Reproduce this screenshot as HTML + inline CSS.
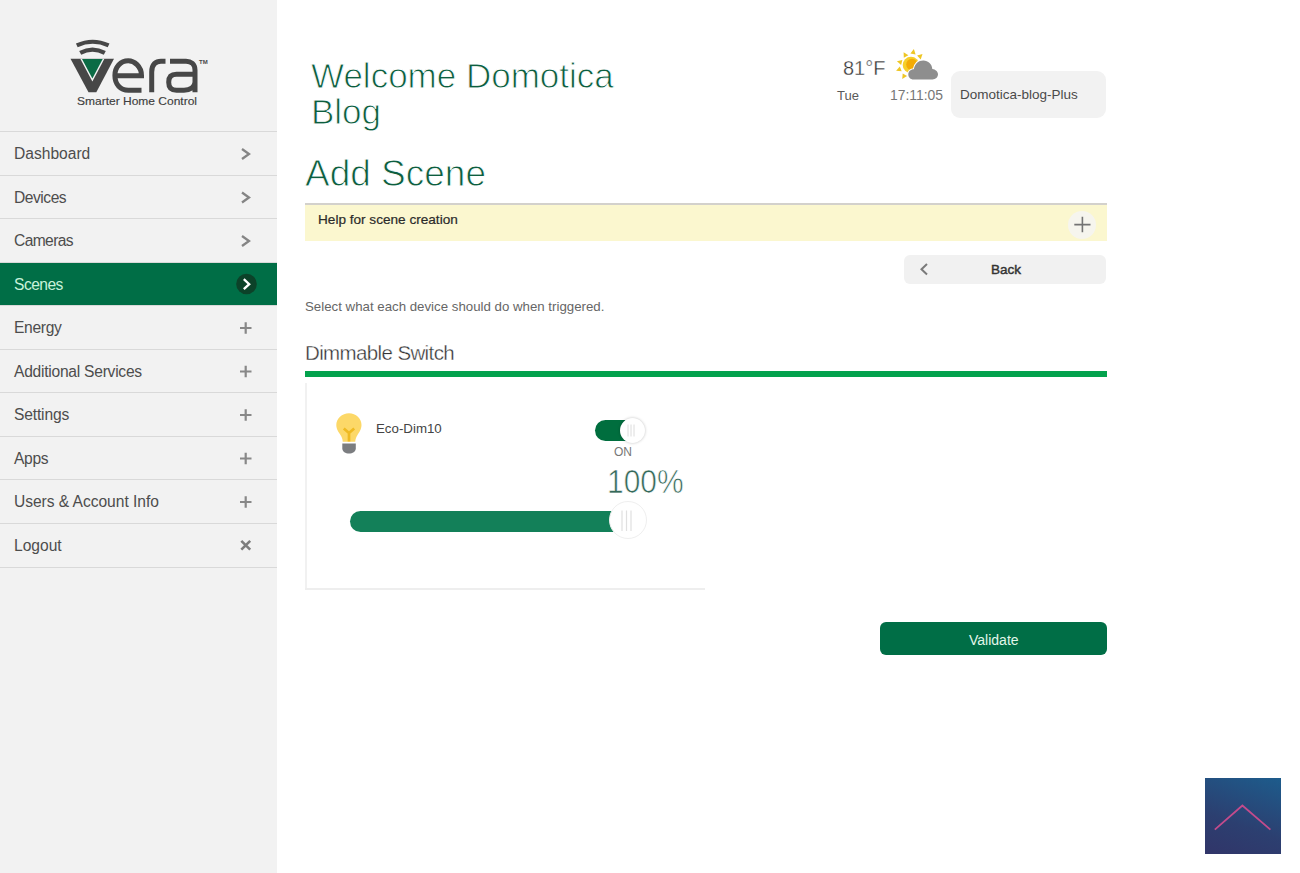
<!DOCTYPE html>
<html><head><meta charset="utf-8">
<style>
*{margin:0;padding:0;box-sizing:border-box}
html,body{width:1300px;height:873px;overflow:hidden;background:#fff;font-family:"Liberation Sans",sans-serif}
.abs{position:absolute;white-space:nowrap}
#side{position:absolute;left:0;top:0;width:277px;height:873px;background:#f2f2f2}
.sep{position:absolute;left:0;width:277px;height:1px;background:#d9d9d9}
.mi{position:absolute;left:14px;font-size:15.6px;line-height:16px;color:#4d4d4d}
.ic{position:absolute}
</style></head><body>
<div id="side">
  <!-- logo -->
  <svg class="abs" style="left:0;top:0" width="277" height="131" viewBox="0 0 277 131">
    <g fill="none" stroke="#474747" stroke-width="4.2" stroke-linecap="butt">
      <path d="M76.8 45.4 Q92.6 38.1 108.6 45.4"/>
      <path d="M80.2 52.9 Q92.5 46.3 104.8 52.9"/>
    </g>
    <polygon points="70.5,58.8 114,58.8 96.3,92.2 88.5,92.2" fill="#474747"/>
    <polygon points="80.3,58.8 104.4,58.8 92.4,81.5" fill="#f4f4f4"/>
    <polygon points="82,59 102.7,59 92.4,78.5" fill="#0b6b45"/>
    <g fill="none" stroke="#474747" stroke-width="5">
      <path d="M115 75.8 H141.5 C141.5 66 134 60.8 128.3 60.8 C120.5 60.8 114.9 67 114.9 75.5 C114.9 84.5 120.5 90.2 128.3 90.2 H141.5"/>
      <path d="M151.7 92.3 V72 C151.7 64 156 61.3 161 61.3 H165.5"/>
      <path d="M170 61.3 H186 C191 61.3 195 64 195 70 V92.3 M195 82 C195 87 190 90.2 184 90.2 H176.5 C171 90.2 168.7 87 168.7 82.2 C168.7 77.5 171 74.3 176.5 74.3 H195"/>
    </g>
    <text x="199" y="63.5" font-family="Liberation Sans" font-size="6" font-weight="bold" fill="#474747">TM</text>
    <text x="77" y="105" font-family="Liberation Sans" font-size="11.5" fill="#404040" stroke="#404040" stroke-width="0.15" textLength="120" lengthAdjust="spacingAndGlyphs">Smarter Home Control</text>
  </svg>
  <div class="sep" style="top:131px"></div>
  <div class="sep" style="top:175px"></div>
  <div class="sep" style="top:218px"></div>
  <div class="sep" style="top:262px"></div>
  <div class="sep" style="top:305px"></div>
  <div class="sep" style="top:349px"></div>
  <div class="sep" style="top:392px"></div>
  <div class="sep" style="top:436px"></div>
  <div class="sep" style="top:479px"></div>
  <div class="sep" style="top:523px"></div>
  <div class="sep" style="top:567px"></div>
  <div style="position:absolute;left:0;top:263px;width:277px;height:42px;background:#006e46"></div>

  <div class="mi abs" style="top:146px">Dashboard</div>
  <div class="mi abs" style="top:190px;letter-spacing:-0.47px">Devices</div>
  <div class="mi abs" style="top:233px;letter-spacing:-0.6px">Cameras</div>
  <div class="mi abs" style="top:277px;color:#c8f2da;letter-spacing:-0.52px">Scenes</div>
  <div class="mi abs" style="top:320px;letter-spacing:-0.32px">Energy</div>
  <div class="mi abs" style="top:364px;letter-spacing:-0.25px">Additional Services</div>
  <div class="mi abs" style="top:407px;letter-spacing:-0.16px">Settings</div>
  <div class="mi abs" style="top:451px;letter-spacing:-0.33px">Apps</div>
  <div class="mi abs" style="top:494px;letter-spacing:-0.04px">Users &amp; Account Info</div>
  <div class="mi abs" style="top:538px">Logout</div>

  <svg class="abs" style="left:0;top:0" width="277" height="600" viewBox="0 0 277 600">
    <g fill="none" stroke="#858585" stroke-width="2.3">
      <path d="M242 149 L249 154 L242 159"/>
      <path d="M242 192.5 L249 197.5 L242 202.5"/>
      <path d="M242 236 L249 241 L242 246"/>
    </g>
    <circle cx="246.5" cy="284" r="10.3" fill="#0c4229"/>
    <path d="M243.8 279.2 L249.2 284.2 L243.8 289.2" fill="none" stroke="#fff" stroke-width="2.3"/>
    <g fill="none" stroke="#888" stroke-width="2.2">
      <path d="M240 328 H251.5 M245.7 322.3 V333.7"/>
      <path d="M240 371.5 H251.5 M245.7 365.8 V377.2"/>
      <path d="M240 415 H251.5 M245.7 409.3 V420.7"/>
      <path d="M240 458.5 H251.5 M245.7 452.8 V464.2"/>
      <path d="M240 502 H251.5 M245.7 496.3 V507.7"/>
      <path d="M241.3 540.8 L250.2 549.7 M250.2 540.8 L241.3 549.7" stroke-width="2.6" stroke="#7d7d7d"/>
    </g>
  </svg>
</div>

<!-- header -->
<div class="abs" style="left:311px;top:58px;font-size:35px;line-height:36.3px;color:#0d5e3f;-webkit-text-stroke:0.9px #fff">Welcome Domotica<br>Blog</div>
<div class="abs" style="left:843px;top:57.5px;font-size:20px;line-height:20px;color:#333;-webkit-text-stroke:0.35px #fff">81°F</div>
<div class="abs" style="left:837px;top:88.5px;font-size:13px;line-height:13px;color:#5a5a5a">Tue</div>
<div class="abs" style="left:890px;top:88.5px;font-size:13.9px;line-height:13px;color:#777">17:11:05</div>
<svg class="abs" style="left:890px;top:45px" width="56" height="40" viewBox="890 45 56 40">
  <g fill="#eec624"><polygon points="913.9,49.1 915.6,54.5 910.4,53.6"/><polygon points="903.6,52.2 908.4,55.2 903.8,57.8"/><polygon points="922.5,54.1 920.7,59.4 917.1,55.6"/><polygon points="896.9,61.3 902.4,60.0 901.1,65.1"/><polygon points="896.1,70.7 899.8,66.5 901.7,71.3"/><polygon points="902.2,79.0 902.7,73.4 907.1,76.1"/></g>
  <circle cx="911" cy="65" r="8.3" fill="#f6cf2a"/>
  <circle cx="912" cy="64.5" r="5.8" fill="#f3ab05"/>
  <path d="M913.5 79.4 C910.5 79.4 908.3 77.2 908.3 74.4 C908.3 71.5 910.5 69.2 913.8 69.2 C915 64 918.5 60.6 923.3 60.6 C928.3 60.6 932 64.3 932.3 69 C935.5 69.3 938 71.8 938 74.3 C938 77.2 935.5 79.4 932.5 79.4 Z" fill="#8e8e8e" stroke="#fff" stroke-width="2" paint-order="stroke"/>
</svg>
<div class="abs" style="left:951px;top:71px;width:155px;height:47px;border-radius:9px;background:#f2f2f2"></div>
<div class="abs" style="left:960px;top:87.5px;font-size:13.5px;line-height:14px;color:#4a4a4a">Domotica-blog-Plus</div>

<div class="abs" style="left:305px;top:155px;font-size:37px;line-height:38px;color:#0d5e3f;-webkit-text-stroke:0.9px #fff">Add Scene</div>
<div class="abs" style="left:305px;top:203px;width:802px;height:2px;background:#d3d1cc"></div>
<div class="abs" style="left:305px;top:205px;width:802px;height:36px;background:#fbf7cf"></div>
<div class="abs" style="left:1068px;top:210.5px;width:28px;height:28px;border-radius:50%;background:#f6f5ee"></div>
<svg class="abs" style="left:1070px;top:212px" width="25" height="25" viewBox="1070 212 25 25"><path d="M1074.3 224.6 H1090.5 M1082.4 216.8 V232.2" stroke="#737373" stroke-width="1.6"/></svg>
<div class="abs" style="left:318px;top:212.5px;font-size:13.6px;line-height:13px;color:#2b2b2b;-webkit-text-stroke:0.2px #2b2b2b">Help for scene creation</div>

<div class="abs" style="left:904px;top:255px;width:202px;height:29px;border-radius:6px;background:#f1f1f1"></div>
<svg class="abs" style="left:915px;top:260px" width="20" height="20" viewBox="915 260 20 20"><path d="M927 264 L921.5 269.2 L927 274.4" fill="none" stroke="#7a7a7a" stroke-width="2"/></svg>
<div class="abs" style="left:991px;top:263px;font-size:13.5px;line-height:14px;color:#333;-webkit-text-stroke:0.45px #333">Back</div>

<div class="abs" style="left:305px;top:300px;font-size:13.27px;line-height:13px;color:#666">Select what each device should do when triggered.</div>
<div class="abs" style="left:305px;top:342px;font-size:20.5px;line-height:21px;letter-spacing:-0.62px;color:#333;-webkit-text-stroke:0.35px #fff">Dimmable Switch</div>
<div class="abs" style="left:305px;top:371px;width:802px;height:6px;background:#03a24d"></div>

<div class="abs" style="left:305px;top:383px;width:2px;height:207px;background:#f1f1f1"></div>
<div class="abs" style="left:305px;top:588px;width:400px;height:2px;background:#eee"></div>

<svg class="abs" style="left:330px;top:405px" width="40" height="55" viewBox="330 405 40 55">
  <path d="M349 413.2 C356 413.2 361.5 418.5 361.5 425 C361.5 429.5 359 432.5 357.5 435 C356 437.5 355.3 439.5 355.3 441.8 L342.7 441.8 C342.7 439.5 342 437.5 340.5 435 C339 432.5 336.3 429.5 336.3 425 C336.3 418.5 342 413.2 349 413.2 Z" fill="#fcd868"/>
  <path d="M343.8 428.5 L349 433 L354.2 428.5 M349 433 V441.5" fill="none" stroke="#efba22" stroke-width="2.7"/>
  <path d="M342.3 443.4 H355.8 V448.5 C355.8 451.5 352.5 453.5 349 453.5 C345.5 453.5 342.3 451.5 342.3 448.5 Z" fill="#7b7d80"/>
</svg>
<div class="abs" style="left:376px;top:421.5px;font-size:13.3px;line-height:13px;color:#444">Eco-Dim10</div>
<div class="abs" style="left:614px;top:445.8px;font-size:12px;line-height:12px;color:#777">ON</div>
<div class="abs" style="left:607px;top:463.5px;font-size:34px;line-height:34px;color:#35695a;transform:scaleX(0.88);transform-origin:0 0;-webkit-text-stroke:0.7px #fff">100%</div>

<div class="abs" style="left:350px;top:511px;width:280px;height:21px;border-radius:10.5px;background:#138059"></div>
<div class="abs" style="left:595px;top:420px;width:40px;height:21px;border-radius:10.5px;background:#006e3e"></div>
<div class="abs" style="left:619.9px;top:417.9px;width:25px;height:25px;border-radius:50%;background:#fff;box-shadow:0 0 3px rgba(0,0,0,0.25)"></div>
<svg class="abs" style="left:620px;top:418px" width="25" height="25" viewBox="620 418 25 25"><path d="M628 424.5 V436.5 M631 424.5 V436.5 M634 424.5 V436.5" stroke="#dcdcdc" stroke-width="1"/></svg>
<div class="abs" style="left:608.8px;top:500.5px;width:38px;height:38px;border-radius:50%;background:#fff;border:1px solid #efefef"></div>
<svg class="abs" style="left:605px;top:500px" width="45" height="40" viewBox="605 500 45 40"><path d="M622 510.5 V531 M626.5 510.5 V531 M631 510.5 V531" stroke="#e0e0e0" stroke-width="1.2"/></svg>

<div class="abs" style="left:880px;top:622px;width:227px;height:33px;border-radius:6px;background:#006e46"></div>
<div class="abs" style="left:969px;top:633px;font-size:14px;line-height:14px;color:#e2f7ea">Validate</div>

<div class="abs" style="left:1205px;top:778px;width:76px;height:76px;background:linear-gradient(200deg,#1d5c8c,#2c3f70 60%,#313569)"></div>
<svg class="abs" style="left:1205px;top:778px" width="76" height="76" viewBox="1205 778 76 76"><path d="M1214.8 829.6 L1242.4 805.5 L1270.4 829.6" fill="none" stroke="#c34b8c" stroke-width="1.8"/></svg>
</body></html>
